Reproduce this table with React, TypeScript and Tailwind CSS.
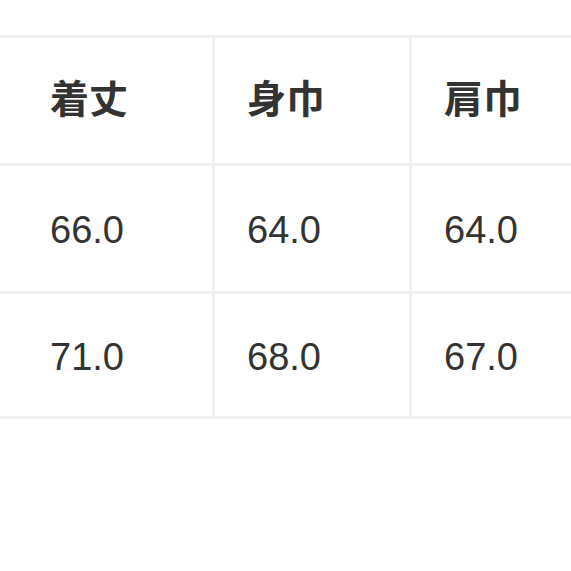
const headers = ["", "着丈", "身巾", "肩巾"];
const rows = [
  ["", "66.0", "64.0", "64.0"],
  ["", "71.0", "68.0", "67.0"],
];

function Cell({ children, head, h }: { children: React.ReactNode; head?: boolean; h: string }) {
  return (
    <div
      className={`flex items-center bg-white pl-8 text-[#333333] ${h} ${
        head
          ? "text-[39px] font-bold [font-family:'Noto_Sans_CJK_JP',sans-serif] pb-2"
          : "text-[38px] [font-family:'Liberation_Sans',Arial,sans-serif] pt-1"
      }`}
    >
      {children}
    </div>
  );
}

export default function App() {
  return (
    <div className="h-[571px] w-[571px] overflow-hidden bg-white">
      <div className="mt-[35px] grid grid-cols-[15px_194px_194px_1fr] gap-[3px] bg-[#f0f0f0] py-[3px]">
        {headers.map((t, i) => (
          <Cell key={i} head h="h-[125px]">
            {t}
          </Cell>
        ))}
        {rows.map((r, ri) =>
          r.map((t, i) => (
            <Cell key={`${ri}-${i}`} h={ri === 0 ? "h-[125px]" : "h-[122px]"}>
              {t}
            </Cell>
          )),
        )}
      </div>
    </div>
  );
}
